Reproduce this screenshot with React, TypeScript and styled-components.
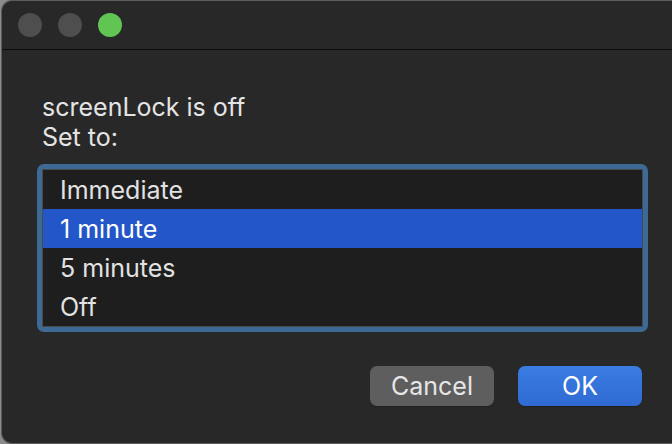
import React from 'react';
import styled, { createGlobalStyle } from 'styled-components';

const Global = createGlobalStyle`
  html, body {
    margin: 0;
    padding: 0;
    width: 672px;
    height: 444px;
    overflow: hidden;
    background: #8c8c8c;
  }
  body {
    font-family: Inter, "Noto Sans", "Liberation Sans", sans-serif;
    -webkit-font-smoothing: antialiased;
  }
`;

const Window = styled.div`
  margin-left: 1px;
  width: 700px;
  height: 442px;
  background: #282828;
  border: 1px solid #5c5c5c;
  border-right: none;
  border-radius: 11px 0 0 11px;
  display: flex;
  flex-direction: column;
  overflow: hidden;
`;

const TitleBar = styled.div`
  height: 48px;
  border-bottom: 1px solid #0b0b0b;
  display: flex;
  align-items: center;
  gap: 16px;
  padding-left: 16px;
`;

const Light = styled.span<{ $color: string }>`
  width: 24px;
  height: 24px;
  border-radius: 50%;
  background: ${p => p.$color};
`;

const Body = styled.div`
  padding: 42px 0 0 35px;
  width: 611px;
`;

const Message = styled.div`
  color: #e4e4e4;
  font-size: 25px;
  line-height: 30px;
  padding-left: 5px;
`;

const ListRing = styled.div`
  margin-top: 12px;
  border: 5px solid #3c6a94;
  border-radius: 7px;
`;

const List = styled.ul`
  list-style: none;
  margin: 0;
  padding: 0;
  background: #1e1e1e;
  border: 1px solid #4a4a4a;
`;

const Row = styled.li<{ $selected?: boolean }>`
  height: 39px;
  display: flex;
  align-items: center;
  padding-left: 17px;
  font-size: 25px;
  color: ${p => (p.$selected ? '#ffffff' : '#e2e2e2')};
  background: ${p => (p.$selected ? '#2356c9' : 'transparent')};
`;

const Buttons = styled.div`
  display: flex;
  justify-content: flex-end;
  gap: 24px;
  margin-top: 34px;
  padding-right: 6px;
`;

const Button = styled.button<{ $primary?: boolean }>`
  width: 124px;
  height: 40px;
  border: none;
  border-radius: 7px;
  font-family: inherit;
  font-size: 25px;
  color: ${p => (p.$primary ? '#ffffff' : '#e6e6e6')};
  background: ${p => (p.$primary ? 'linear-gradient(#3a7de2, #2f6ad2)' : '#5e5e5e')};
  box-shadow: 0 1px 1px rgba(0, 0, 0, 0.25);
  padding: 0;
`;

const options = ['Immediate', '1 minute', '5 minutes', 'Off'];

export default function App() {
  return (
    <>
      <Global />
      <Window>
        <TitleBar>
          <Light $color="#4e4e4e" />
          <Light $color="#4e4e4e" />
          <Light $color="#61c554" />
        </TitleBar>
        <Body>
          <Message>
            screenLock is off
            <br />
            Set to:
          </Message>
          <ListRing>
            <List>
              {options.map(o => (
                <Row key={o} $selected={o === '1 minute'}>
                  {o}
                </Row>
              ))}
            </List>
          </ListRing>
          <Buttons>
            <Button>Cancel</Button>
            <Button $primary>OK</Button>
          </Buttons>
        </Body>
      </Window>
    </>
  );
}
